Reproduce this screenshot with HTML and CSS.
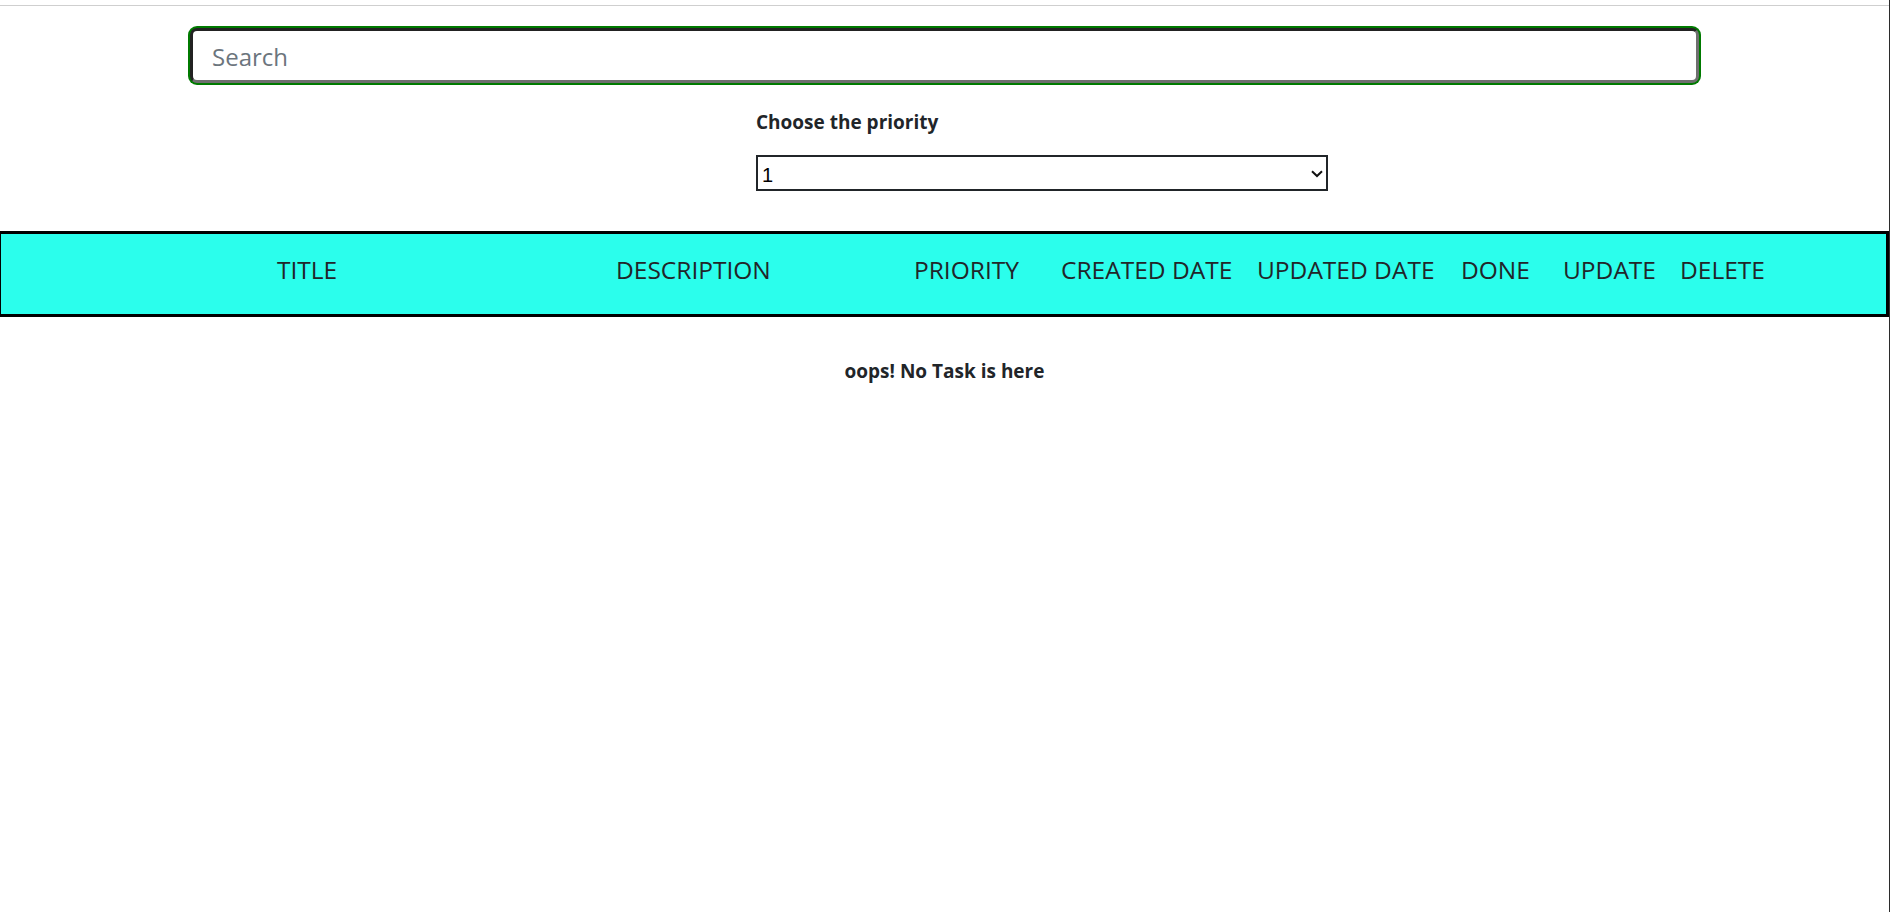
FILE: index.html
```html
<!DOCTYPE html>
<html lang="en">
<head>
<meta charset="utf-8">
<title>Tasks</title>
<link rel="stylesheet" href="styles.css">
</head>
<body>
<div class="page">
  <div class="topline"></div>
  <div class="search-row">
    <input class="search" type="text" placeholder="Search">
  </div>
  <div class="priority">
    <label class="priority-label" for="prio">Choose the priority</label>
    <div class="select-wrap">
      <select id="prio" class="priority-select">
        <option>1</option>
        <option>2</option>
        <option>3</option>
      </select>
      <svg class="chevron" width="12" height="8" viewBox="0 0 12 8"><path d="M1 1.2 L6 6 L11 1.2" fill="none" stroke="#111" stroke-width="2"/></svg>
    </div>
  </div>
  <div class="table-head">
    <div class="th">TITLE</div>
    <div class="th">DESCRIPTION</div>
    <div class="th">PRIORITY</div>
    <div class="th">CREATED DATE</div>
    <div class="th">UPDATED DATE</div>
    <div class="th">DONE</div>
    <div class="th">UPDATE</div>
    <div class="th">DELETE</div>
  </div>
  <p class="empty">oops! No Task is here</p>
</div>
</body>
</html>
```

FILE: styles.css
```css
html, body {
  margin: 0;
  padding: 0;
  background: #fff;
  overflow: hidden;
}
body {
  font-family: "Open Sans", "Noto Sans", sans-serif;
  color: #212529;
}
.page {
  width: 1890px;
  height: 912px;
  box-sizing: border-box;
  border-right: 1px solid #2b2b2b;
  overflow: hidden;
}
.topline {
  margin-top: 5px;
  height: 1px;
  background: #cfcfcf;
}
.search-row {
  display: flex;
  justify-content: center;
  padding-top: 22px;
}
.search {
  box-sizing: border-box;
  width: 1509px;
  height: 55px;
  margin: 0 auto;
  border: 3px solid;
  border-color: #222 #6f6f6f #6f6f6f #222;
  border-radius: 7px;
  box-shadow: 0 0 0 2px #007a00;
  padding: 2px 18px 0 19px;
  font-family: "Open Sans", sans-serif;
  font-size: 24px;
  color: #212529;
  outline: none;
  background: #fff;
}
.search::placeholder {
  color: #6c757d;
}
.priority {
  width: 572px;
  margin-left: 756px;
  margin-top: 27px;
}
.priority-label {
  display: block;
  font-weight: 700;
  font-size: 19px;
  line-height: 24px;
  margin-bottom: 21px;
}
.select-wrap {
  position: relative;
}
.priority-select {
  display: block;
  box-sizing: border-box;
  width: 572px;
  height: 36px;
  margin: 0;
  border: 2px solid #212529;
  border-radius: 0;
  background: #fff;
  appearance: none;
  -webkit-appearance: none;
  padding: 3px 4px 0;
  font-family: "Liberation Sans", Arial, sans-serif;
  font-size: 20px;
  color: #000;
}
.chevron {
  position: absolute;
  right: 5px;
  top: 15px;
  pointer-events: none;
}
.table-head {
  box-sizing: border-box;
  width: 1891px;
  margin-left: -2px;
  margin-top: 40px;
  height: 86px;
  border: 3px solid #000;
  background: #2bfeec;
  display: grid;
  grid-template-columns: 339px 298px 147px 196px 204px 102px 117px 1fr;
  align-items: center;
  padding-left: 276px;
  padding-bottom: 9px;
}
.th {
  font-size: 24.5px;
  line-height: 24px;
  white-space: nowrap;
  color: #212529;
}
.empty {
  margin: 42px 0 0;
  text-align: center;
  font-weight: 700;
  font-size: 19px;
  line-height: 24px;
}
```
